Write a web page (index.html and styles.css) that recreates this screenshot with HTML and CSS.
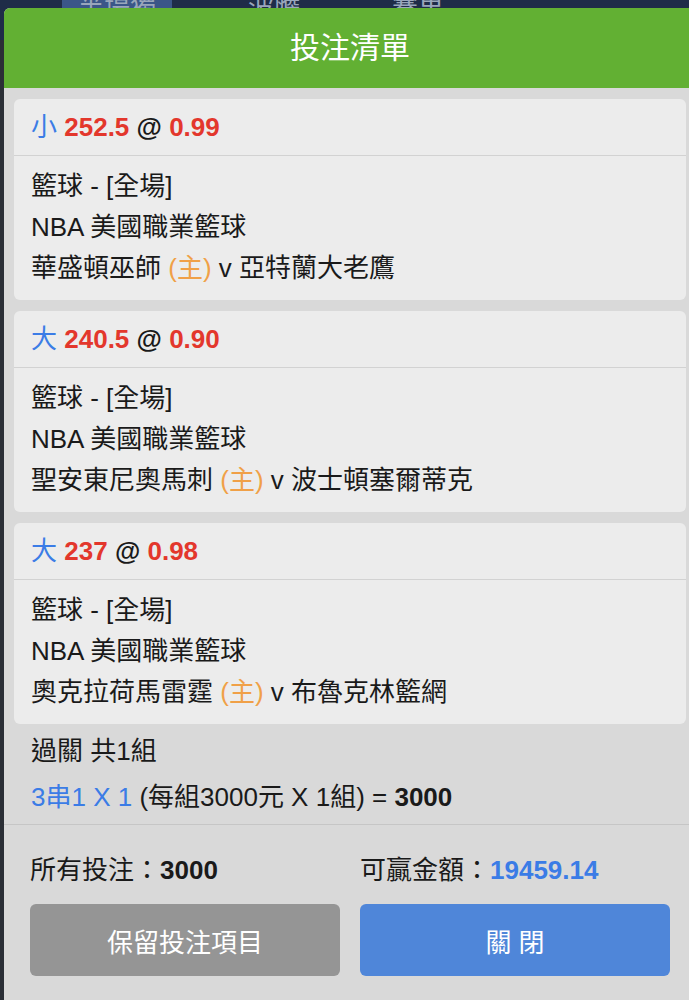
FILE: index.html
```html
<!DOCTYPE html>
<html lang="zh-Hant">

<head>
    <meta charset="UTF-8">
    <meta name="viewport" content="width=device-width, initial-scale=1.0">
    <title>投注清單</title>
    <link rel="stylesheet" href="styles.css">
</head>

<body>
    <div class="backdrop">
        <div class="tab active">半場獨</div>
        <div class="tab">波膽</div>
        <div class="tab">賽果</div>
    </div>

    <div class="modal">
        <div class="modalHead">投注清單</div>

        <div class="modalBody">
            <div class="cards">
                <div class="card">
                    <div class="cardHead">
                        <span class="blue">小</span> <b class="red">252.5</b> <b>@</b> <b class="red">0.99</b>
                    </div>
                    <div class="cardBody">
                        <p>籃球 - [全場]</p>
                        <p>NBA 美國職業籃球</p>
                        <p>華盛頓巫師 <span class="orange">(主)</span> v 亞特蘭大老鷹</p>
                    </div>
                </div>

                <div class="card">
                    <div class="cardHead">
                        <span class="blue">大</span> <b class="red">240.5</b> <b>@</b> <b class="red">0.90</b>
                    </div>
                    <div class="cardBody">
                        <p>籃球 - [全場]</p>
                        <p>NBA 美國職業籃球</p>
                        <p>聖安東尼奧馬刺 <span class="orange">(主)</span> v 波士頓塞爾蒂克</p>
                    </div>
                </div>

                <div class="card">
                    <div class="cardHead">
                        <span class="blue">大</span> <b class="red">237</b> <b>@</b> <b class="red">0.98</b>
                    </div>
                    <div class="cardBody">
                        <p>籃球 - [全場]</p>
                        <p>NBA 美國職業籃球</p>
                        <p>奧克拉荷馬雷霆 <span class="orange">(主)</span> v 布魯克林籃網</p>
                    </div>
                </div>
            </div>

            <div class="parlay">
                <p>過關 共1組</p>
                <p><span class="blue">3串1 X 1</span> (每組3000元 X 1組) = <b>3000</b></p>
            </div>
        </div>

        <div class="modalFoot">
            <div class="totals">
                <p>所有投注：<b>3000</b></p>
                <p>可贏金額：<b class="blue">19459.14</b></p>
            </div>
            <div class="buttons">
                <button class="btn keep">保留投注項目</button>
                <button class="btn close">關 閉</button>
            </div>
        </div>
    </div>
</body>

</html>
```

FILE: styles.css
```css
* {
    box-sizing: border-box;
    margin: 0;
    padding: 0;
}

body {
    width: 689px;
    height: 1000px;
    overflow: hidden;
    background: #2b2f36;
    font-family: "Liberation Sans", "Noto Sans CJK TC", sans-serif;
    font-size: 26px;
    color: #1a1a1a;
}

.backdrop {
    height: 40px;
    background: #1f2c48;
    display: flex;
    padding-left: 62px;
    gap: 60px;
    margin-bottom: -32px;
}

.tab {
    color: #9aa6bb;
    font-size: 26px;
    line-height: 16px;
    padding: 0 16px;
    height: 8px;
    overflow: hidden;
}

.tab.active {
    background: #3b5688;
}

.modal {
    margin-left: 4px;
    width: 692px;
    background: #d9d9d9;
    border-radius: 6px 6px 0 0;
    overflow: hidden;
    position: relative;
}

.modalHead {
    background: #62b033;
    color: #fff;
    height: 80px;
    line-height: 80px;
    text-align: center;
    font-size: 30px;
}

.modalBody {
    padding: 11px 10px 0;
}

.cards {
    display: flex;
    flex-direction: column;
    gap: 11px;
}

.card {
    background: #ececec;
    border-radius: 6px;
}

.cardHead {
    height: 57px;
    line-height: 56px;
    padding: 0 17px;
    border-bottom: 1px solid #d2d2d2;
}

.cardBody {
    padding: 10px 17px 11px;
}

.cardBody p {
    line-height: 41px;
    height: 41px;
}

.parlay {
    padding: 7px 17px 6px;
}

.parlay p {
    line-height: 41px;
}

.parlay p + p {
    margin-top: 5px;
}

.modalFoot {
    border-top: 1px solid #c6c6c6;
    padding: 25px 26px 40px;
}

.totals,
.buttons {
    display: grid;
    grid-template-columns: 1fr 1fr;
    column-gap: 20px;
}

.totals p {
    line-height: 41px;
}

.buttons {
    margin-top: 13px;
}

.btn {
    height: 72px;
    border: none;
    border-radius: 6px;
    color: #fff;
    font-family: "Liberation Sans", "Noto Sans CJK TC", sans-serif;
    font-size: 26px;
}

.keep {
    background: #959595;
}

.close {
    background: #4f86d9;
}

.blue {
    color: #3b7ce6;
}

.red {
    color: #e3372c;
}

.orange {
    color: #f0a047;
}
```
